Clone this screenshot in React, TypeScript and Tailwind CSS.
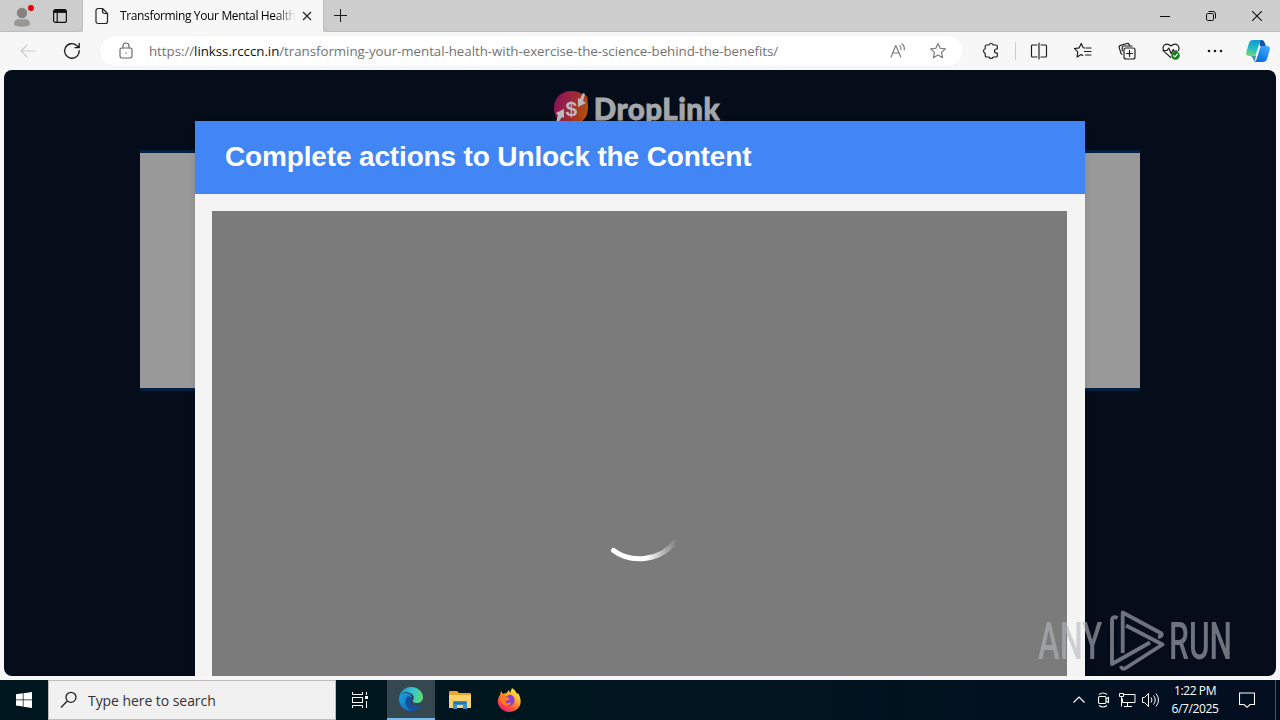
import type { ReactNode } from 'react';

interface IconProps {
  size?: number;
  className?: string;
  children: ReactNode;
}

function Icon({ size = 18, className = 'text-[#1b1b1b]', children }: IconProps) {
  return (
    <svg
      width={size}
      height={size}
      viewBox="0 0 18 18"
      fill="none"
      stroke="currentColor"
      strokeWidth={1.15}
      strokeLinecap="round"
      strokeLinejoin="round"
      className={`shrink-0 ${className}`}
    >
      {children}
    </svg>
  );
}

const STAR = 'M9 1.5l2.2 4.8 5.2.6-3.9 3.5 1.1 5.3L9 13.1l-4.6 2.6 1.1-5.3L1.6 6.9l5.2-.6z';

function TabStrip() {
  return (
    <div className="flex h-8 shrink-0 bg-[#cdcdcd]">
      <div className="flex w-[83px] items-center rounded-br-md border-r border-b border-[#bdbdbd] pl-3">
        <svg width="24" height="24" viewBox="0 0 24 24" className="shrink-0">
          <circle cx="10" cy="9" r="5.2" fill="#858280" />
          <path d="M2 21c0-4 2-5.8 4-5.8h8c2.5 0 4 2 4 5.8-4 2.3-12 2.3-16 0z" fill="#999694" />
          <circle cx="19" cy="4" r="3" fill="#e5000b" />
        </svg>
        <svg width="16" height="16" viewBox="0 0 16 16" fill="none" stroke="#111" className="ml-4">
          <rect x="1.6" y="1.6" width="12.8" height="12.8" rx="2" strokeWidth="1.2" />
          <path d="M2 3.4h12" strokeWidth="3" />
          <path d="M5.2 4v10" strokeWidth="1.2" />
        </svg>
      </div>
      <div className="flex w-60 items-center bg-[#f7f7f7] pl-3">
        <svg width="14" height="18" viewBox="0 0 14 18" fill="none" stroke="#222" strokeWidth="1.2" strokeLinejoin="round" className="shrink-0">
          <path d="M3 1.5h4.5l5 5v8a2 2 0 0 1-2 2H3a2 2 0 0 1-2-2v-11a2 2 0 0 1 2-2zM7.5 1.5v3a2 2 0 0 0 2 2h3" />
        </svg>
        <div className="ml-[11px] w-[176px] overflow-hidden whitespace-nowrap bg-linear-to-r from-black from-88% to-transparent bg-clip-text text-[12px] leading-[18px] tracking-[-0.36px] text-transparent">
          Transforming Your Mental Health
        </div>
        <svg width="10" height="10" viewBox="0 0 10 10" stroke="#222" strokeWidth="1.2" className="ml-[6px] shrink-0">
          <path d="M1 1l8 8M9 1L1 9" />
        </svg>
      </div>
      <div className="flex flex-1 items-center rounded-bl-md border-b border-l border-[#bdbdbd]">
        <svg width="13" height="13" viewBox="0 0 13 13" stroke="#1b1b1b" className="ml-[10px]">
          <path d="M6.5 0v13M0 6.5h13" />
        </svg>
        <div className="ml-auto flex">
          <div className="flex w-[46px] justify-center">
            <svg width="10" height="10" viewBox="0 0 10 10" stroke="#111">
              <path d="M0 5.5h10" />
            </svg>
          </div>
          <div className="flex w-[46px] justify-center">
            <svg width="10" height="10" viewBox="0 0 10 10" fill="none" stroke="#111">
              <rect x=".5" y="2.5" width="7" height="7" rx="1.3" />
              <path d="M2.5.5H7A2.5 2.5 0 0 1 9.5 3v4.5" />
            </svg>
          </div>
          <div className="flex w-[46px] justify-center">
            <svg width="10" height="10" viewBox="0 0 10 10" stroke="#111" strokeWidth="1.1">
              <path d="M0 0l10 10M10 0L0 10" />
            </svg>
          </div>
        </div>
      </div>
    </div>
  );
}

function CopilotLogo() {
  return (
    <svg width="24" height="24" viewBox="0 0 24 24">
      <defs>
        <linearGradient id="cpLeft" x1="8" y1="1" x2="5" y2="17" gradientUnits="userSpaceOnUse">
          <stop offset="0" stopColor="#129bd5" />
          <stop offset=".5" stopColor="#20b9c5" />
          <stop offset="1" stopColor="#72da72" />
        </linearGradient>
        <linearGradient id="cpRight" x1="20" y1="7" x2="12" y2="23" gradientUnits="userSpaceOnUse">
          <stop offset="0" stopColor="#39a9ff" />
          <stop offset="1" stopColor="#086bdd" />
        </linearGradient>
      </defs>
      <path d="M13 1h3q2 0 2.8 3L20 7.5h-6z" fill="#164fac" />
      <path d="M4 16.5h6l-1 5.5-1.5-1-1.3-3z" fill="#3098b7" />
      <path d="M7 1h9q-2 .3-2.6 3L10 15q-.7 2-2.7 2H3Q-.4 17 .3 13L3 4q1-3 4-3z" fill="url(#cpLeft)" />
      <path d="M17 23H8q2-.3 2.7-3L14 9q.8-2 3-2h4q3.4 0 2.7 4L21 20q-1 3-4 3z" fill="url(#cpRight)" />
    </svg>
  );
}

function Toolbar() {
  return (
    <div className="flex h-[38px] shrink-0 items-center bg-[#f7f7f7]">
      <div className="flex w-[50px] justify-center pl-1.5">
        <Icon className="text-[#cbcbcb]">
          <path d="M16 9H2M8 3L2 9l6 6" />
        </Icon>
      </div>
      <div className="flex w-[50px] pl-[13px]">
        <Icon>
          <path d="M16.2 8.6A7.3 7.3 0 1 1 13.7 3.4L16 5.5M16.2 1.5v4.2H12" strokeWidth="1.3" />
        </Icon>
      </div>
      <div className="flex h-[30px] w-[863px] items-center rounded-full bg-white pl-[17px] shadow-[0_0_1px_#ddd]">
        <Icon className="text-[#666]">
          <rect x="3" y="6" width="12" height="10" rx="1.7" />
          <path d="M6 6V4a3 3 0 0 1 6 0v2" />
          <circle cx="9" cy="11" r=".7" fill="currentColor" stroke="none" />
        </Icon>
        <div className="ml-[14px] whitespace-nowrap text-[13.3px] leading-5 tracking-[-0.035px] text-[#737373]">
          https://<span className="text-[#111]">linkss.rcccn.in</span>
          /transforming-your-mental-health-with-exercise-the-science-behind-the-benefits/
        </div>
        <div className="ml-auto flex gap-[22px] pr-4">
          <Icon className="text-[#777]">
            <path d="M2 15L6.8 3.5l5 11.5M3.7 11H10M10.8 3.6q1.7 1.7 1.2 4M12.8 1.8q3.2 2.6 2.4 6.2" />
          </Icon>
          <Icon className="text-[#777]">
            <path d={STAR} />
          </Icon>
        </div>
      </div>
      <div className="flex w-[53px] justify-end border-r border-[#ccc] pr-[15px]">
        <Icon>
          <path d="M4.5 3H7a2.2 2.2 0 0 1 4.2 0H14q1.3 0 1.3 1.3V7h-.8a2 2 0 0 0 0 4h.8v2.7q0 1.3-1.3 1.3h-2.8a2.2 2.2 0 0 1-4.2 0H4.5q-1.3 0-1.3-1.3v-2.5a2.3 2.3 0 0 1 0-4.4V4.3Q3.2 3 4.5 3z" />
        </Icon>
      </div>
      <div className="ml-[14px] flex items-center gap-[26px]">
        <Icon>
          <path d="M7 3H2.5Q1.5 3 1.5 4v10q0 1 1 1H7M11 3h4.5q1 0 1 1v10q0 1-1 1H11M9 1v16" />
        </Icon>
        <Icon>
          <path d="M10.8 6l-1.6-.3L7.2 1.5 5.1 5.9l-4.6.7 3.3 3.3-.7 5.2 4.1-2.5 1.6.9M12 6h5M10.5 9.5H17M11.5 13H17" />
        </Icon>
        <Icon>
          <rect x="6" y="6" width="11" height="11" rx="2" />
          <path d="M11.5 8.5v6M8.5 11.5h6M4 12.2l-1-.6-1.8-6q-.5-1.6 1.3-2.2L9 1.5q1.5-.4 2.2 1l.5 1.4M4.2 9V6q0-2 2-2H14" />
        </Icon>
        <Icon>
          <path d="M8.7 15.5L2 9.4Q-.2 5.4 2.3 3.1 5.2.8 9 4q4-3.4 6.8-.7 2 2.2.7 5.1M1 8.5h4L6.7 6l2.5 5.5 2-4 1 1.6h3" />
          <circle cx="13.5" cy="13.5" r="3.7" fill="#16801b" stroke="#16801b" />
          <path d="M11.5 13.6l1.4 1.3 2.6-2.8" stroke="#fff" />
        </Icon>
        <Icon>
          <g fill="currentColor" stroke="none">
            <circle cx="3" cy="9" r="1.3" />
            <circle cx="9" cy="9" r="1.3" />
            <circle cx="15" cy="9" r="1.3" />
          </g>
        </Icon>
      </div>
      <div className="ml-auto pr-[10px]">
        <CopilotLogo />
      </div>
    </div>
  );
}

function DropLinkLogo() {
  return (
    <div className="flex h-9 items-center gap-[6px]">
      <svg width="34" height="34" viewBox="0 0 34 34">
        <defs>
          <linearGradient id="drop" x1="0" y1="12" x2="34" y2="22" gradientUnits="userSpaceOnUse">
            <stop offset=".05" stopColor="#8c1457" />
            <stop offset=".55" stopColor="#a22c32" />
            <stop offset="1" stopColor="#b65209" />
          </linearGradient>
        </defs>
        <path d="M17 0q7 0 11 3 6 1 5.5 5Q34 13 34 17c0 10-7 17-17 17S0 27 0 17 7 0 17 0z" fill="url(#drop)" />
        <path d="M2 22l8-4v9l-2-1-4 6-2-1 2-7zM32 12l-8 4V7l2 1 3-6 2 1-2 7z" fill="#bbb" />
        <text x="17.3" y="24.5" textAnchor="middle" fontSize="21" fontWeight="700" fontFamily="Liberation Sans" fill="#bbb">$</text>
      </svg>
      <span className="whitespace-nowrap pt-px font-['Lato','Open_Sans',sans-serif] text-[29.5px] leading-9 font-black tracking-[0.5px] text-[#a5a7aa] [-webkit-text-stroke:0.8px_#a5a7aa]">
        DropLink
      </span>
    </div>
  );
}

function UnlockModal() {
  return (
    <div className="absolute top-[51px] left-[191px] flex h-[555px] w-[890px] flex-col bg-[#f4f4f4] shadow-[0_0_6px_rgba(0,0,0,0.12)]">
      <div className="flex h-[73px] shrink-0 items-center bg-[#4285f4] pb-[2px] pl-[30px]">
        <h2 className="font-['Liberation_Sans',Arial,sans-serif] text-[28px] leading-9 font-bold tracking-[-0.15px] text-white">
          Complete actions to Unlock the Content
        </h2>
      </div>
      <div className="mt-[17px] mr-[18px] ml-[17px] flex flex-1 justify-center bg-[#7b7b7b] pt-[327px]">
        <svg width="72" height="28" viewBox="0 0 72 28">
          <defs>
            <linearGradient id="spin" x1="42" y1="0" x2="73" y2="0" gradientUnits="userSpaceOnUse">
              <stop offset="0" stopColor="#fff" />
              <stop offset="1" stopColor="#fff" stopOpacity="0" />
            </linearGradient>
          </defs>
          <path d="M9.5 12.5C26 25 55 24 71 4" fill="none" stroke="url(#spin)" strokeWidth="5" strokeLinecap="round" />
        </svg>
      </div>
    </div>
  );
}

function Watermark() {
  return (
    <div className="absolute top-[539px] left-[1034px] flex h-[64px] w-[198px] items-center text-[#b5b8be] opacity-60">
      <span className="w-[66px] whitespace-nowrap">
        <span className="inline-block origin-left translate-y-px scale-x-[0.64] font-['Roboto',sans-serif] text-[51px] leading-[60px] font-medium">
          ANY
        </span>
      </span>
      <svg width="58" height="62" viewBox="0 0 58 62" fill="none" stroke="currentColor" strokeWidth="3.8" strokeLinejoin="round" className="ml-[5px] shrink-0">
        <path d="M8.5 8Q3 5.500 3 11V54L41 32.500M13.700 43V2.500L52.500 23.500Q53.500 26.500 49 27M17 15.500L53.500 34.500L16 58.500Q12.500 59.500 12 56" />
      </svg>
      <span className="ml-[2px] w-[64px] whitespace-nowrap">
        <span className="inline-block origin-left translate-y-px scale-x-[0.62] font-['Roboto',sans-serif] text-[51px] leading-[60px] font-medium">
          RUN
        </span>
      </span>
    </div>
  );
}

function EdgeLogo() {
  return (
    <svg width="24" height="24" viewBox="0 0 24 24">
      <defs>
        <linearGradient id="edgeTop" x1="1" y1="8" x2="24" y2="12" gradientUnits="userSpaceOnUse">
          <stop offset="0" stopColor="#1692db" />
          <stop offset=".5" stopColor="#35c5d2" />
          <stop offset="1" stopColor="#63df65" />
        </linearGradient>
        <linearGradient id="edgeLow" x1="1" y1="8" x2="16" y2="23" gradientUnits="userSpaceOnUse">
          <stop offset="0" stopColor="#1aa0dd" />
          <stop offset="1" stopColor="#1362b4" />
        </linearGradient>
      </defs>
      <path d="M0 12Q0 6 7 6c5 0 6 4 5 5-5 5 0 9 6 9q2 0 4-1c-2 3-6 5-10 5A12 12 0 0 1 0 12z" fill="url(#edgeLow)" />
      <path d="M9 9c-5 5-2 12 4 15 4 0 8-2 9.500-5.500-7 3-13-2-10-7.500z" fill="#174f98" />
      <path d="M0 11C1 4 6 0 12 0c7 0 12 5 12 10 0 4-3 6-6 6s-5-1-4-3c3-4-2-8-7-8-3 0-6 3-7 6z" fill="url(#edgeTop)" />
    </svg>
  );
}

function FirefoxLogo() {
  return (
    <svg width="24" height="24" viewBox="0 0 24 24">
      <defs>
        <linearGradient id="fox" x1="20" y1="2" x2="5" y2="22" gradientUnits="userSpaceOnUse">
          <stop offset="0" stopColor="#fff04a" />
          <stop offset=".35" stopColor="#ffac24" />
          <stop offset=".7" stopColor="#ff5437" />
          <stop offset="1" stopColor="#ec1e79" />
        </linearGradient>
      </defs>
      <path d="M4 3l2 3q2-1 3-.5L12 2l1 3 2-5c3 2 4 4 5 6l1-1c7 12-1 19-9 19C4 24-3 15 3 7z" fill="url(#fox)" />
      <path d="M8 9l4-2c4-1 7 4 5 8-3 5-9 3-10-1l3-1 3-2-3-1z" fill="#8a41d8" />
      <path d="M3 9l4-2 5 3-3 2-1 2c2 2 4 1 6 0-1 6-9 4-11-2z" fill="#ff7c20" />
    </svg>
  );
}

function Taskbar() {
  return (
    <div className="flex h-10 shrink-0 bg-linear-to-r from-[#00161f] via-[#00161f] via-45% to-[#020e20] text-white">
      <div className="flex w-12 items-center justify-center">
        <svg width="16" height="16" viewBox="0 0 16 16" fill="#fff">
          <path d="M0 2.3l6.8-1v6.3H0zM7.5 1.2L16 0v7.6H7.5zM0 8.3h6.8v6.3l-6.8-1zM7.5 8.3H16V16l-8.5-1.2z" />
        </svg>
      </div>
      <div className="flex w-72 items-center border border-[#bcbcbc] bg-[#f1f1f1] pl-[11px] text-[#333]">
        <svg width="17" height="18" viewBox="0 0 17 18" fill="none" stroke="#222" strokeWidth="1.3">
          <circle cx="11" cy="6.3" r="5" />
          <path d="M7.3 10L1 16.5" />
        </svg>
        <span className="ml-[11px] pt-px text-[14px] tracking-[-0.06px]">Type here to search</span>
      </div>
      <div className="mr-[3px] flex w-12 items-center justify-center">
        <svg width="16" height="16" viewBox="0 0 16 16" fill="none" stroke="#fff" strokeWidth="1">
          <path d="M.5 0v2.5h10V0M.5 16v-2.5h10V16M14.5 0v3M14.5 9v7" />
          <rect x=".5" y="5.5" width="10" height="5" />
          <rect x="13" y="4" width="3" height="3" fill="#fff" stroke="none" />
        </svg>
      </div>
      <div className="flex w-12 items-center justify-center border-b-2 border-[#76b9ed] bg-[#35474f]">
        <EdgeLogo />
      </div>
      <div className="flex w-[49px] items-center justify-center">
        <svg width="22" height="20" viewBox="0 0 22 20">
          <path d="M0 2q0-1 1-1h7l2 2h11q1 0 1 1v14H0z" fill="#e7a62f" />
          <path d="M0 5h22v13H0z" fill="#f9d268" />
          <path d="M4 19v-7q0-1 1-1h12q1 0 1 1v7h-4v-4H8v4z" fill="#3b91cb" />
          <path d="M5 12h12v2H5z" fill="#2477ad" />
        </svg>
      </div>
      <div className="flex w-[49px] items-center justify-center">
        <FirefoxLogo />
      </div>
      <div className="ml-auto flex items-center">
        <svg width="12" height="8" viewBox="0 0 12 8" fill="none" stroke="#fff" strokeWidth="1.2">
          <path d="M.5 6.5L6 1l5.5 5.5" />
        </svg>
        <svg width="14" height="16" viewBox="0 0 14 16" fill="none" stroke="#fff" strokeWidth="1.1" className="ml-[12px]">
          <rect x="1.500" y="4.5" width="7.500" height="7" rx="1.2" />
          <path d="M9 7l2.500-1.500v5L9 9M2 2.5q4-3 8 0M2 13.5q4 3 8 0" />
        </svg>
        <svg width="17" height="16" viewBox="0 0 17 16" fill="none" stroke="#fff" className="ml-[8px]">
          <path d="M5 2.5h11v8H3.5v-4M8.5 10.5v4M5 14.5h8M.5 1.5h4v3h-4zM2.5 4.5v10" />
        </svg>
        <svg width="18" height="16" viewBox="0 0 18 16" fill="none" stroke="#fff" className="ml-[6px]">
          <path d="M.5 5.5h2l4-4v13l-4-4h-2zM9 5.5q2 2.5 0 5M11.5 3.5q3.5 4.5 0 9M14 1.5q5 6.5 0 13" />
        </svg>
        <div className="ml-2 w-[54px] text-center text-[12px] leading-[18px] tracking-[-0.4px] whitespace-nowrap">
          <div>1:22 PM</div>
          <div>6/7/2025</div>
        </div>
        <svg width="16" height="16" viewBox="0 0 16 16" fill="none" stroke="#fff" strokeWidth="1.1" className="ml-[17px]">
          <path d="M.5 1h15v11.5H11L8 15.3 5 12.5H.5z" />
        </svg>
        <div className="ml-5 h-10 w-[5px] border-l border-[#455460]" />
      </div>
    </div>
  );
}

export default function App() {
  return (
    <div className="flex h-[720px] w-[1280px] flex-col overflow-hidden bg-[#f7f7f7] font-['Open_Sans','Noto_Sans',sans-serif]">
      <TabStrip />
      <Toolbar />
      <main className="relative mx-1 mb-1 h-[606px] shrink-0 overflow-hidden rounded-lg bg-[#050d1b]">
        <div className="flex h-20 justify-center pt-5 pr-[6px]">
          <DropLinkLogo />
        </div>
        <div className="mx-auto h-[241px] w-[1000px] border-y-[3px] border-[#05203f] bg-[#999]" />
        <UnlockModal />
        <Watermark />
      </main>
      <Taskbar />
    </div>
  );
}
